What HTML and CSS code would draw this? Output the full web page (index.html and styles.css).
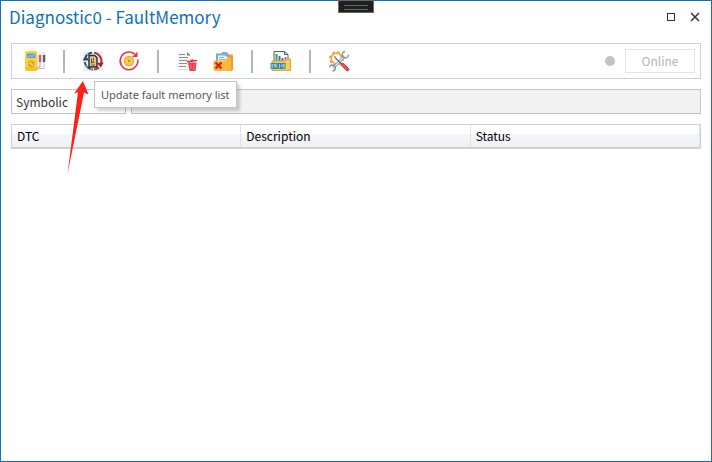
FILE: index.html
```
<!DOCTYPE HTML>
<html lang="en">
<head>
<meta charset="utf-8">
<title>Diagnostic0 - FaultMemory</title>
<link rel="stylesheet" href="styles.css">
</head>
<body>
<div class="window">
    <div class="grip"></div>
    <header class="titlebar">
        <h1>Diagnostic0 - FaultMemory</h1>
        <button class="winbtn" aria-label="Maximize">
            <svg width="10" height="10" viewBox="0 0 10 10"><rect x="1.5" y="1.5" width="7" height="7" fill="none" stroke="#333"/></svg>
        </button>
        <button class="winbtn" aria-label="Close">
            <svg width="10" height="10" viewBox="0 0 10 10"><path d="M1 1l8 8M9 1L1 9" stroke="#333" stroke-width="1.5"/></svg>
        </button>
    </header>

    <div class="toolbar">
        <button class="tool" aria-label="Diagnostic device">
            <svg viewBox="0 0 22 22">
                <rect x="1" y="1" width="12.5" height="20" rx="2" fill="#fbd03f"/>
                <path d="M1 17v2a2 2 0 0 0 2 2h8.500a2 2 0 0 0 2-2v-2z" fill="#f6c330"/>
                <rect x="3" y="3.500" width="8.500" height="4.500" fill="#4da3e0"/>
                <path d="M4 7l2-1.500 2 1 2.500-2" fill="none" stroke="#a8dcfa" stroke-width=".8"/>
                <circle cx="7.300" cy="14" r="3.400" fill="#dda52b"/>
                <path d="M5.500 12.500l3.500 3" stroke="#fbdc74" stroke-width="1.400"/>
                <path d="M13.500 18.500h6.500V10" fill="none" stroke="#aebbc4" stroke-width=".9"/>
                <path d="M13.500 17h2.500V12" fill="none" stroke="#e9838a"/>
                <path d="M16 2v3M20 2v3" stroke="#c3ccd2"/>
                <rect x="14.800" y="5" width="2.500" height="7" fill="#d95560"/>
                <rect x="18.800" y="5" width="2.500" height="7" fill="#4b6672"/>
            </svg>
        </button>
        <span class="sep"></span>
        <button class="tool" aria-label="Update fault memory list" aria-describedby="tip">
            <svg viewBox="0 0 22 22">
                <rect x="1" y="1.500" width="20" height="19.500" fill="#e2f0fb"/>
                <path d="M10 2.800A8.500 8.500 0 0 0 3.500 7M2.800 12a8.500 8.500 0 0 0 8 7.500" fill="none" stroke="#2d566b" stroke-width="2" stroke-dasharray="4.500 .7"/>
                <path d="M12 2.800a8.500 8.500 0 0 1 7.200 10.500M17 17.500a8.500 8.500 0 0 1-5 2" fill="none" stroke="#c02f40" stroke-width="2"/>
                <path d="M.5 10.500l3.300-5 3.200 5z" fill="#2c4d60"/>
                <path d="M21.800 12.500l-3 5-3.800-4.500z" fill="#b01e2e"/>
                <path d="M7 5.500h5.500l2.500 2v9.500H7z" fill="#dfc68d" stroke="#302a26" stroke-width="1.400"/>
                <path d="M9.500 8.500v5M11.500 8v2.500l-1 2h2M9.500 15h3.500" fill="none" stroke="#5d4929" stroke-width=".9"/>
            </svg>
        </button>
        <button class="tool" aria-label="Refresh cyclically">
            <svg viewBox="0 0 22 22">
                <path d="M16.500 4A8.800 8.800 0 1 0 19.700 9.500" fill="none" stroke="#e8343f" stroke-width="1.600"/>
                <path d="M19.500 1.500v5.500H14z" fill="#e8343f"/>
                <circle cx="11" cy="11" r="4.600" fill="#f8cf33" stroke="#efa23d" stroke-width="1.200"/>
                <circle cx="11" cy="11" r="1.200" fill="#7d9db0"/>
            </svg>
        </button>
        <span class="sep"></span>
        <button class="tool" aria-label="Delete entry">
            <svg viewBox="0 0 22 22">
                <path d="M1.500 2h9.500l3.500 3.500V18h-13z" fill="#f4f4f4"/>
                <path d="M11 2l3.500 3.500H11z" fill="#777"/>
                <path d="M3 4.500h6M3 7.500h9M3 10.500h8M3 13.500h8M3 16.500h7" stroke="#8f8f8f" stroke-width="1.200"/>
                <path d="M1.500 19.500h10" stroke="#ddd"/>
                <path d="M12 12.500h8.500l-1 8.500h-6z" fill="#ea3f55"/>
                <path d="M11 11.700l10-1.200M14.500 10.500l3-.5" stroke="#e23149" stroke-width="1.700"/>
                <path d="M14.500 14l.5 5.500M18 14l-.5 5.500" stroke="#f77987" stroke-width=".8"/>
            </svg>
        </button>
        <button class="tool" aria-label="Clear fault memory">
            <svg viewBox="0 0 22 22">
                <path d="M4 3.500h5l1.500-1.500h4L17 4.500v9H4z" fill="#78a9d8"/>
                <path d="M6 5.500h7l3 2v6H6z" fill="#eaf4fc"/>
                <path d="M7 7.500h5M7 9.500h6" stroke="#86b6df"/>
                <path d="M16.500 4.500H20a1 1 0 0 1 1 1V19a2 2 0 0 1-2 2h-5z" fill="#f39b24"/>
                <path d="M1.500 10.500h11l2.500-2.500h4V19a2 2 0 0 1-2 2H3a1.500 1.500 0 0 1-1.500-1.500z" fill="#fcb83d"/>
                <path d="M3.500 12.500l6 6M9.500 12.500l-6 6" stroke="#d01f1a" stroke-width="2.200"/>
            </svg>
        </button>
        <span class="sep"></span>
        <button class="tool" aria-label="Open log">
            <svg viewBox="0 0 22 22">
                <path d="M4 1.500h10.500l3.500 3V14H4z" fill="#f5fafd" stroke="#52626f"/>
                <path d="M14.500 1.500v3H18" fill="none" stroke="#52626f"/>
                <path d="M6.500 12V4" stroke="#3aa25b" stroke-width="2"/>
                <path d="M9.500 12V6" stroke="#3977b8" stroke-width="2"/>
                <path d="M12.500 12V8" stroke="#d33c6c" stroke-width="2"/>
                <path d="M15.500 12V7" stroke="#7d57a5" stroke-width="1.500"/>
                <path d="M2 11h12.500l2-2H20.500v11.500H2z" fill="#f8cd56" stroke="#c29a3a" stroke-width=".8"/>
                <rect x="1" y="13.500" width="14" height="5" fill="#79d1ef" stroke="#31718f" stroke-width=".8"/>
                <path d="M3.500 14.500v3h2M7 14.500h1.500v3H7zM12.500 14.500h-2v3h2V16" fill="none" stroke="#285d79" stroke-width=".7"/>
            </svg>
        </button>
        <span class="sep"></span>
        <button class="tool" aria-label="Settings">
            <svg viewBox="0 0 22 22">
                <circle cx="8.500" cy="8.500" r="6.500" fill="none" stroke="#e39a45" stroke-width="1.800" stroke-dasharray="2.500 2.600"/>
                <circle cx="8.500" cy="8.500" r="5.300" fill="#fff" stroke="#f3a63b" stroke-width="1.700"/>
                <path d="M5 18L16.500 6.500" stroke="#7c8b97" stroke-width="2.800"/>
                <path d="M5 18L16.500 6.500" stroke="#eef2f5" stroke-width="1.300"/>
                <path d="M20.500 4.500a3.200 3.200 0 1 1-3.200-3" fill="none" stroke="#8595a1" stroke-width="1.300"/>
                <path d="M1.500 17.500a3 3 0 1 1 3 3.500" fill="none" stroke="#8595a1" stroke-width="1.300"/>
                <path d="M7 7.500l7 7" stroke="#647682" stroke-width="1.400"/>
                <path d="M5.500 5.500l2.500 1 .5 2-2-.5z" fill="#98a5af"/>
                <path d="M14.500 14.500l5 5" stroke="#c23641" stroke-width="3.400" stroke-linecap="round"/>
                <path d="M14.500 14.500l5 5" stroke="#ea5252" stroke-width="2" stroke-linecap="round"/>
            </svg>
        </button>
        <span class="led"></span>
        <button class="online" disabled>Online</button>
    </div>

    <div class="filters">
        <select class="format" aria-label="Display format">
            <option>Symbolic</option>
        </select>
        <input class="filter" type="text" aria-label="Filter" disabled>
    </div>

    <table class="faults">
        <thead>
            <tr><th>DTC</th><th>Description</th><th>Status</th></tr>
        </thead>
        <tbody></tbody>
    </table>

    <div class="tooltip" id="tip" role="tooltip">Update fault memory list</div>
    <svg class="pointer" width="24" height="96" viewBox="0 0 24 96">
        <path d="M18 0l5.500 13.500-4.500-2L2.500 93 13 11l-4 1.500z" fill="#ff1f14"/>
    </svg>
</div>
</body>
</html>
```
FILE: styles.css
```
* {
    box-sizing: border-box;
}
body {
    margin: 0;
    background: #fff;
    color: #1e1e1e;
    font: 12px/16px "Noto Sans CJK SC", "Noto Sans", sans-serif;
}
button, select, input {
    font: inherit;
    margin: 0;
}
.window {
    position: relative;
    min-height: 100vh;
    padding: 0 10px;
    border: 1px solid #1170bd;
}

/* title */
.titlebar {
    display: flex;
    align-items: center;
    height: 32px;
    margin: 0 -6px 10px -2px;
}
.titlebar h1 {
    flex: 1;
    margin: 0;
    color: #1170bd;
    font-size: 17px;
    font-weight: 400;
    line-height: 24px;
}
.winbtn {
    display: flex;
    align-items: center;
    justify-content: center;
    width: 24px;
    height: 24px;
    padding: 0;
    border: 0;
    background: none;
}
.grip {
    position: absolute;
    top: -1px;
    left: 50%;
    width: 36px;
    height: 13px;
    margin-left: -18px;
    border: 1px solid #686868;
    background: #1f2020;
}
.grip::after {
    content: "";
    display: block;
    height: 3px;
    margin: 4px 5px;
    border: solid #686868;
    border-width: 1px 0;
}

/* toolbar */
.toolbar {
    display: flex;
    align-items: center;
    height: 36px;
    padding: 0 5px;
    border: 1px solid #d0d0d0;
}
.tool {
    width: 36px;
    height: 24px;
    padding: 0;
    border: 0;
    background: none;
}
.tool svg {
    display: block;
    width: 22px;
    height: 22px;
    margin: 0 auto;
}
.sep {
    width: 2px;
    height: 23px;
    margin: 0 10px;
    background: #adb5be;
}
.led {
    width: 10px;
    height: 10px;
    margin: 0 10px 0 auto;
    border-radius: 50%;
    background: #c3c3c3;
}
.online {
    width: 70px;
    height: 24px;
    padding: 0;
    border: 1px solid #e4e4e4;
    background: #fff;
    color: #b4b4b4;
}

/* filter row */
.filters {
    display: flex;
    gap: 5px;
    margin: 10px 0;
}
.format, .filter {
    height: 25px;
    padding: 0 4px;
    border: 1px solid #c4c4c4;
    border-radius: 0;
}
.format {
    width: 115px;
    appearance: none;
    background: #fff;
    color: #333;
}
.filter {
    flex: 1;
    background: #f2f2f2;
}

/* fault list */
.faults {
    width: 100%;
    table-layout: fixed;
    border: 1px solid #d0d0d0;
    border-bottom: 2px solid #d0d1d4;
    border-spacing: 0;
}
.faults th {
    height: 22px;
    padding: 0 5px;
    border-right: 1px solid #e0e1e4;
    background: linear-gradient(#fff 40%, #f5f6f9 41%, #eff0f3);
    color: #000;
    font-weight: 400;
    text-align: left;
}

/* overlays */
.tooltip {
    position: absolute;
    top: 80px;
    left: 93px;
    padding: 5px 6px 4px;
    border: 1px solid #c4c4c4;
    background: #fff;
    box-shadow: 3px 3px 3px rgba(0, 0, 0, .18);
    color: #575757;
    font-family: "Noto Sans", sans-serif;
    font-size: 11px;
    white-space: nowrap;
}
.pointer {
    position: absolute;
    top: 80px;
    left: 64px;
}
```
